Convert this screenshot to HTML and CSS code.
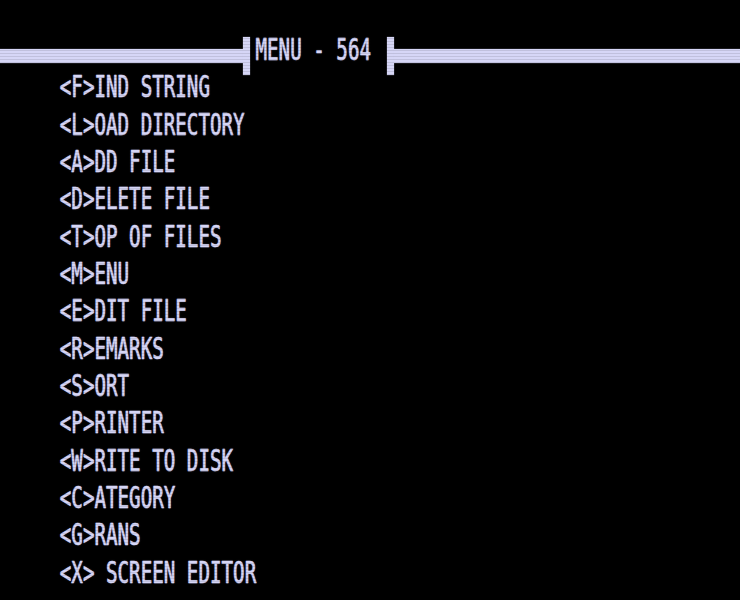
FILE: index.html
```html
<!DOCTYPE html>
<html>
<head>
<meta charset="utf-8">
<link rel="stylesheet" href="styles.css">
</head>
<body>
<div class="screen">
  <div class="header">
    <div class="bar bar-left"></div>
    <div class="tick"></div>
    <div class="title"><span class="txt">MENU - 564</span></div>
    <div class="tick"></div>
    <div class="bar bar-right"></div>
  </div>
  <div class="menu">
    <div class="row"><span class="txt">&lt;F&gt;IND STRING</span></div>
    <div class="row"><span class="txt">&lt;L&gt;OAD DIRECTORY</span></div>
    <div class="row"><span class="txt">&lt;A&gt;DD FILE</span></div>
    <div class="row"><span class="txt">&lt;D&gt;ELETE FILE</span></div>
    <div class="row"><span class="txt">&lt;T&gt;OP OF FILES</span></div>
    <div class="row"><span class="txt">&lt;M&gt;ENU</span></div>
    <div class="row"><span class="txt">&lt;E&gt;DIT FILE</span></div>
    <div class="row"><span class="txt">&lt;R&gt;EMARKS</span></div>
    <div class="row"><span class="txt">&lt;S&gt;ORT</span></div>
    <div class="row"><span class="txt">&lt;P&gt;RINTER</span></div>
    <div class="row"><span class="txt">&lt;W&gt;RITE TO DISK</span></div>
    <div class="row"><span class="txt">&lt;C&gt;ATEGORY</span></div>
    <div class="row"><span class="txt">&lt;G&gt;RANS</span></div>
    <div class="row"><span class="txt">&lt;X&gt; SCREEN EDITOR</span></div>
  </div>
</div>
<div class="scanlines"></div>
</body>
</html>
```
FILE: styles.css
```css
html, body {
  margin: 0;
  padding: 0;
  background: #000;
  width: 740px;
  height: 600px;
  overflow: hidden;
}
.screen {
  padding-top: 31px;
  color: #d6d6f6;
  font-family: "DejaVu Sans Mono", "Liberation Mono", monospace;
  font-size: 19.2px;
  line-height: 37.35px;
}
.txt {
  display: inline-block;
  white-space: pre;
  transform: scaleY(1.57);
  transform-origin: 50% 50%;
  -webkit-text-stroke: 0.3px #d6d6f6;
  text-shadow: 0 0 1px rgba(214, 214, 246, 0.7);
}
.header {
  display: flex;
  align-items: flex-start;
  height: 37.35px;
}
.bar {
  height: 14px;
  margin-top: 18px;
  background: #d6d6f6;
  box-shadow: 0 0 1px rgba(214, 214, 246, 0.7);
}
.bar-left {
  width: 243px;
  flex: 0 0 243px;
}
.bar-right {
  flex: 1;
}
.tick {
  width: 7px;
  flex: 0 0 7px;
  height: 38px;
  margin-top: 6px;
  background: #d6d6f6;
  box-shadow: 0 0 1px rgba(214, 214, 246, 0.7);
}
.title {
  flex: 0 0 137px;
  width: 137px;
  padding-left: 5.5px;
  box-sizing: border-box;
}
.menu {
  padding-left: 59.8px;
}
.row {
  height: 37.35px;
}
.scanlines {
  position: fixed;
  left: 0;
  top: 0;
  width: 740px;
  height: 600px;
  pointer-events: none;
  background: repeating-linear-gradient(to bottom, rgba(0,0,0,0) 0px, rgba(0,0,0,0) 2px, rgba(0,0,0,0.1) 2px, rgba(0,0,0,0.1) 3px);
}
```
